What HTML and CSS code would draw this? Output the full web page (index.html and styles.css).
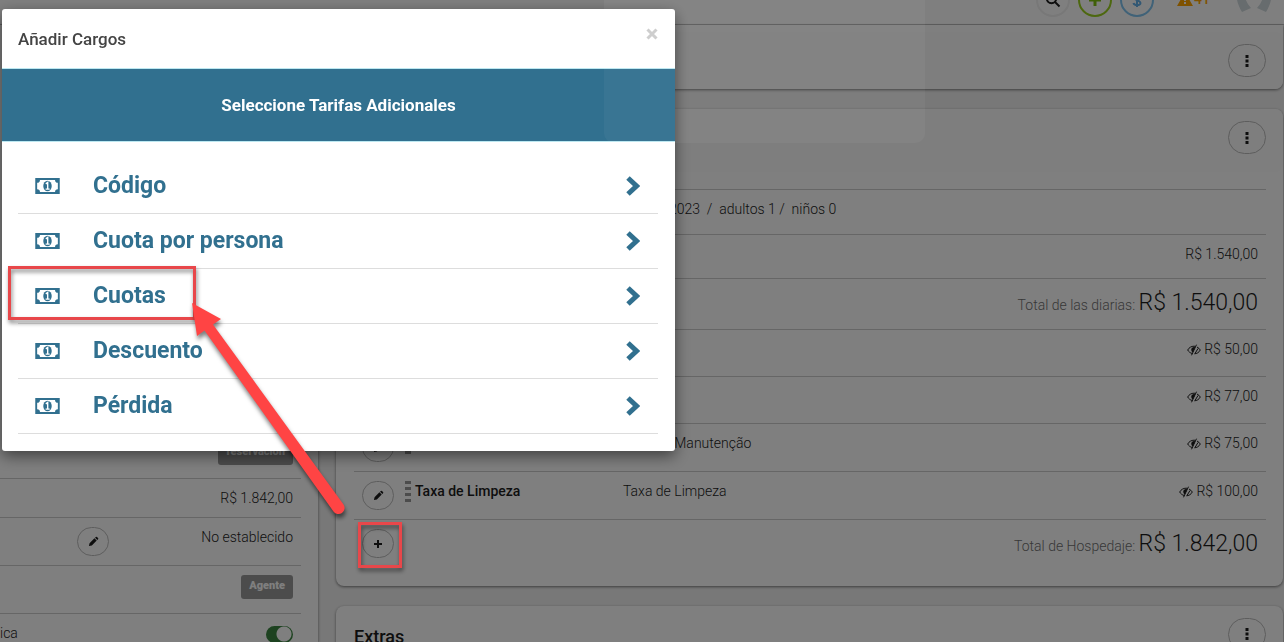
FILE: index.html
```html
<!DOCTYPE html>
<html lang="es">
  <head>
    <meta charset="utf-8">
    <meta name="viewport" content="width=device-width, initial-scale=1.0">
    <title>Añadir Cargos</title>
    <link rel="stylesheet" href="styles.css">
  </head>
  <body>
    <svg class="sprite" aria-hidden="true">
      <symbol id="pencil" viewBox="0 0 12 12"><path d="M1 11l.7-3.2L7 2.5 9.500 5 4.200 10.300zM7.700 1.800l.8-.8q.6-.5 1.200 0L11 2.300q.5.600 0 1.200l-.8.8z"/></symbol>
      <symbol id="dots" viewBox="0 0 4 12"><path d="M.5 0h3v3h-3zM.5 4.500h3v3h-3zM.5 9h3v3h-3z"/></symbol>
      <symbol id="eye" viewBox="0 0 14 12"><path d="M5.500 9.600C3 9 1.500 7.500.7 6 2 3.500 4.500 2.200 7 2.200l1.200.1M10 3c1.500.8 2.600 1.800 3.300 3-1.200 2.400-3.500 3.800-6 3.800" fill="none" stroke="currentColor"/><path d="M9.500.7L4.500 11.300M11 4.500L8.300 9" fill="none" stroke="currentColor"/><path d="M8.300 3.200L5.800 8.500C3.300 6.700 4 3.200 7 3z"/></symbol>
      <symbol id="money" viewBox="0 0 26 17"><path fill-rule="evenodd" d="M0 0h26v17H0zM5 2Q5 5 2 5v7q3 0 3 3h16q0-3 3-3V5q-3 0-3-3z"/><ellipse cx="13" cy="8.500" rx="4.500" ry="5.500"/><path d="M11.200 6.200l2-1.500v6.600M11 11.800h4.300" fill="none" stroke="#fff" stroke-width="1.500"/></symbol>
      <symbol id="chevron" viewBox="0 0 14 20"><path d="M2 2l8.500 8L2 18" fill="none" stroke="currentColor" stroke-width="5"/></symbol>
    </svg>

    <header class="topbar">
      <button class="round search" aria-label="Buscar"><svg viewBox="0 0 16 16"><circle cx="6.500" cy="6.500" r="4.700"/><path d="M10 10l4.500 4.500"/></svg></button>
      <button class="round add" aria-label="Agregar"><svg viewBox="0 0 16 16"><path d="M8 2v12M2 8h12"/></svg></button>
      <button class="round money" aria-label="Pagos"><svg viewBox="0 0 16 16"><path d="M11.500 5C11 2.500 5 2.500 5 5.500S11.500 8 11.500 11 5 13.500 4.500 11M8 1v14"/></svg></button>
      <a class="alerts" href="#"><svg viewBox="0 0 16 14"><path fill-rule="evenodd" d="M8 0l8 14H0zM7 5v4h2V5zm0 5v2h2v-2z"/></svg>41</a>
      <a class="avatar" href="#" aria-label="Perfil"><svg viewBox="0 0 34 34"><path d="M8 3C-2 8-3 20 5 33l9-4Q5 20 8 3zM26 3c10 5 11 17 3 30l-9-4Q29 20 26 3z"/></svg></a>
    </header>

    <div class="page">
      <aside class="summary">
        <div class="summaryRow badgeRow"><span class="badge">reservación</span></div>
        <div class="summaryRow total">R$ 1.842,00</div>
        <div class="summaryRow edit">
          <button class="pill" aria-label="Editar"><svg class="pencil"><use href="#pencil"/></svg></button>
          <span>No establecido</span>
        </div>
        <div class="summaryRow edit"><span class="badge">Agente</span></div>
        <div class="summaryRow toggleRow">
          <label for="electronica">ica</label>
          <input id="electronica" class="toggle" type="checkbox" checked>
        </div>
      </aside>

      <main>
        <section class="card first">
          <div class="cardHead"><button class="pill menu" aria-label="Opciones"><svg class="dots"><use href="#dots"/></svg></button></div>
        </section>

        <section class="card">
          <div class="cardHead"><button class="pill menu" aria-label="Opciones"><svg class="dots"><use href="#dots"/></svg></button></div>
          <table class="charges">
            <colgroup><col class="colEdit"><col class="colName"><col class="colText"><col></colgroup>
            <tr><td></td><td></td><td colspan="2"><span class="date">03/2023</span> &nbsp;/&nbsp; adultos 1 /&nbsp; niños 0</td></tr>
            <tr class="daily"><td></td><td></td><td></td><td class="amount">R$ 1.540,00</td></tr>
            <tr class="sum"><td colspan="4" class="amount"><span>Total de las diarias:</span> <strong>R$ 1.540,00</strong></td></tr>
            <tr class="fee"><td></td><td></td><td></td><td class="amount"><svg class="eye"><use href="#eye"/></svg>R$ 50,00</td></tr>
            <tr class="fee"><td></td><td></td><td></td><td class="amount"><svg class="eye"><use href="#eye"/></svg>R$ 77,00</td></tr>
            <tr class="fee">
              <td class="tools"><button class="pill" aria-label="Editar"><svg class="pencil"><use href="#pencil"/></svg></button><i class="grip"></i></td>
              <th>Manutenção</th><td>Taxa de Manutenção</td>
              <td class="amount"><svg class="eye"><use href="#eye"/></svg>R$ 75,00</td>
            </tr>
            <tr class="fee">
              <td class="tools"><button class="pill" aria-label="Editar"><svg class="pencil"><use href="#pencil"/></svg></button><i class="grip"></i></td>
              <th>Taxa de Limpeza</th><td>Taxa de Limpeza</td>
              <td class="amount"><svg class="eye"><use href="#eye"/></svg>R$ 100,00</td>
            </tr>
            <tr class="sum last">
              <td class="tools"><button class="pill" aria-label="Agregar cargo"><svg class="plus" viewBox="0 0 10 10"><path d="M5 1v8M1 5h8"/></svg></button></td>
              <td colspan="3" class="amount"><span>Total de Hospedaje:</span> <strong>R$ 1.842,00</strong></td>
            </tr>
          </table>
        </section>

        <section class="card extras">
          <h2>Extras</h2>
          <button class="pill menu" aria-label="Opciones"><svg class="dots"><use href="#dots"/></svg></button>
        </section>
      </main>
    </div>

    <div class="backdrop"></div>

    <div class="modal" role="dialog" aria-labelledby="modalTitle">
      <div class="modalHead">
        <h1 id="modalTitle">Añadir Cargos</h1>
        <button class="close" aria-label="Cerrar"><svg viewBox="0 0 12 12"><path d="M1.500 1.500l9 9M10.500 1.500l-9 9"/></svg></button>
      </div>
      <div class="band">Seleccione Tarifas Adicionales</div>
      <div class="options">
        <button class="option"><svg class="note"><use href="#money"/></svg><span>Código</span><svg class="chevron"><use href="#chevron"/></svg></button>
        <button class="option"><svg class="note"><use href="#money"/></svg><span>Cuota por persona</span><svg class="chevron"><use href="#chevron"/></svg></button>
        <button class="option"><svg class="note"><use href="#money"/></svg><span>Cuotas</span><svg class="chevron"><use href="#chevron"/></svg></button>
        <button class="option"><svg class="note"><use href="#money"/></svg><span>Descuento</span><svg class="chevron"><use href="#chevron"/></svg></button>
        <button class="option"><svg class="note"><use href="#money"/></svg><span>Pérdida</span><svg class="chevron"><use href="#chevron"/></svg></button>
      </div>
    </div>

    <div class="veil"></div>
    <div class="mark markOption"></div>
    <div class="mark markAdd"></div>
    <svg class="arrow" viewBox="0 0 160 220"><path d="M2 2l29 16-8 5.500L153.500 203.500a6 6 0 0 1-10 7L14.500 29.500 7 35z"/></svg>
  </body>
</html>
```
FILE: styles.css
```css
*{
  box-sizing: border-box;
}
body{
  margin: 0;
  height: 100vh;
  overflow: hidden;
  background-color: #f1f1f1;
  color: #1c1c1c;
  font: 300 14px/20px Roboto, "Liberation Sans", sans-serif;
}
button{
  padding: 0;
  border: 0;
  background: none;
  color: inherit;
  font: inherit;
}
svg{
  fill: currentColor;
}
.sprite{
  position: absolute;
  width: 0;
  height: 0;
}

/* top bar */
.topbar{
  display: flex;
  justify-content: flex-end;
  align-items: flex-end;
  height: 25px;
  padding: 0 13px 7px 0;
  background-color: #fff;
  border-bottom: 1px solid #c4c4c4;
}
.round{
  display: flex;
  align-items: center;
  justify-content: center;
  flex: none;
  width: 34px;
  height: 34px;
  margin-right: 8px;
  border: 2px solid #f0f0f0;
  border-radius: 50%;
}
.round svg{
  width: 16px;
  height: 16px;
  fill: none;
  stroke: currentColor;
  stroke-width: 3;
}
.search svg{
  stroke-width: 2;
}
.add{
  border-color: #9bd020;
  color: #7fc010;
}
.money{
  border-color: #80c4f0;
  color: #65b0e8;
}
.money svg{
  stroke-width: 2;
}
.alerts{
  display: flex;
  align-items: center;
  margin: 0 27px 8px 15px;
  color: #ffa500;
  font-weight: 500;
  text-decoration: none;
}
.alerts svg{
  width: 16px;
  height: 14px;
  margin-right: 1px;
}
.avatar{
  height: 34px;
  margin-bottom: 4px;
  color: #cfd8dc;
}
.avatar svg{
  display: block;
  width: 34px;
  height: 34px;
}

/* layout */
.page{
  display: flex;
  gap: 18px;
  height: calc(100vh - 25px);
  padding-right: 1px;
}
main{
  flex: 1;
}
.card, .summary{
  background-color: #fff;
  box-shadow: 0 1px 3px rgba(0, 0, 0, .5);
}
.card{
  margin-bottom: 20px;
  border-radius: 8px;
}
.first{
  padding-top: 7px;
  border-radius: 0 0 8px 8px;
}
.cardHead{
  display: flex;
  justify-content: flex-end;
  height: 63px;
  padding: 12px 17px 0;
  background-color: #fcfcfc;
  border-radius: 8px;
}
.first .cardHead{
  height: 57px;
}
.pill{
  display: inline-flex;
  align-items: center;
  justify-content: center;
  flex: none;
  width: 32px;
  height: 29px;
  border: 1px solid #bbb;
  border-radius: 15px;
}
.menu{
  width: 38px;
  height: 33px;
  border-radius: 17px;
}
.dots{
  width: 4px;
  height: 12px;
}
.pencil{
  width: 11px;
  height: 11px;
}
.plus{
  width: 10px;
  height: 10px;
  stroke: currentColor;
  stroke-width: 2;
}

/* summary */
.summary{
  flex: none;
  width: 318px;
  padding: 379px 17px 0 0;
}
.summaryRow{
  display: flex;
  justify-content: flex-end;
  padding: 9px 8px 0 0;
  border-bottom: 1px solid #ccc;
}
.badgeRow{
  height: 75px;
  padding-top: 37px;
}
.badge{
  height: 24px;
  padding: 0 8px;
  border-radius: 3px;
  background-color: #999;
  color: #fff;
  font-size: 11px;
  font-weight: 900;
  line-height: 22px;
}
.total{
  height: 39px;
}
.edit{
  height: 48px;
}
.edit .pill{
  margin-right: auto;
  margin-left: 77px;
}
.toggleRow{
  justify-content: space-between;
  border: 0;
}
.toggle{
  width: 27px;
  height: 17px;
  margin: 3px 0 0;
  border-radius: 9px;
  background: radial-gradient(circle at 18px 8px, #fff 7px, #3a8540 8px);
  appearance: none;
}

/* charges */
.charges{
  width: calc(100% - 35px);
  margin: 17px 17px 0 18px;
  border-collapse: collapse;
  table-layout: fixed;
}
.colEdit{
  width: 61px;
}
.colName{
  width: 208px;
}
.colText{
  width: 240px;
}
.charges td, .charges th{
  height: 45px;
  padding: 9px 0 0;
  border-top: 1px solid #ccc;
  text-align: left;
  vertical-align: top;
}
.charges th{
  font-weight: 500;
}
.charges .daily td{
  height: 44px;
}
.charges .fee td{
  height: 47px;
}
.charges .fee .tools{
  height: 48px;
}
.charges .sum td{
  height: 51px;
}
.charges .last td{
  height: 66px;
}
.charges .amount{
  padding-right: 8px;
  text-align: right;
}
.date{
  display: inline-block;
  width: 77px;
  text-align: right;
}
.sum .amount{
  color: #707070;
  line-height: 30px;
}
.sum strong{
  color: #1c1c1c;
  font-size: 23px;
  font-weight: 300;
}
.charges .tools{
  padding-left: 8px;
  white-space: nowrap;
}
.grip{
  display: inline-block;
  width: 6px;
  height: 22px;
  margin-left: 11px;
  vertical-align: top;
  background: repeating-linear-gradient(#999 0 3px, transparent 3px 6px);
}
.eye{
  width: 14px;
  height: 12px;
  margin-right: 3px;
  vertical-align: -2px;
}
.extras{
  display: flex;
  justify-content: space-between;
  height: 80px;
  padding: 12px 17px 0 18px;
}
.extras h2{
  margin: 9px 0 0;
  font-size: 18px;
  font-weight: 500;
}

/* modal */
.backdrop{
  position: fixed;
  inset: 0;
  background-color: rgba(0, 0, 0, .5);
}
.modal{
  position: fixed;
  top: 9px;
  left: 2px;
  width: 673px;
  max-width: calc(100% - 4px);
  padding-bottom: 17px;
  border-radius: 3px;
  background-color: #fff;
  box-shadow: 0 5px 15px rgba(0, 0, 0, .5);
}
.modalHead{
  display: flex;
  justify-content: space-between;
  align-items: center;
  height: 59px;
  padding: 0 17px 0 16px;
}
.modalHead h1{
  margin: 0;
  color: #444;
  font-size: 17px;
  font-weight: 500;
}
.close{
  width: 12px;
  height: 20px;
  margin-bottom: 8px;
}
.close svg{
  width: 12px;
  height: 12px;
  stroke: #ccc;
  stroke-width: 3;
}
.band{
  padding: 26px 0;
  background-color: #31708f;
  border: solid #bce8f1;
  border-width: 1px 0;
  color: #fff;
  font-size: 17px;
  font-weight: 700;
  text-align: center;
}
.options{
  padding: 17px 17px 0 16px;
}
.option{
  display: flex;
  align-items: center;
  width: 100%;
  height: 55px;
  padding: 0 18px 0 17px;
  border-bottom: 1px solid #ddd;
  color: #31708f;
  font-size: 23px;
  font-weight: 700;
}
.option span{
  flex: 1;
  margin-left: 33px;
  text-align: left;
}
.note{
  width: 25px;
  height: 16px;
}
.chevron{
  width: 14px;
  height: 20px;
}

/* highlights over the page */
.veil{
  position: fixed;
  top: 0;
  left: 604px;
  width: 321px;
  height: 143px;
  border-radius: 0 0 10px 10px;
  background-color: rgba(255, 255, 255, .04);
}
.mark{
  position: fixed;
  border: 3px solid #e8474a;
  filter: drop-shadow(1px 3px 2px rgba(0, 0, 0, .5));
}
.markOption{
  top: 266px;
  left: 8px;
  width: 188px;
  height: 54px;
}
.markAdd{
  top: 522px;
  left: 358px;
  width: 44px;
  height: 46px;
}
.arrow{
  position: fixed;
  top: 301px;
  left: 190px;
  width: 160px;
  height: 220px;
  color: #ff4444;
  filter: drop-shadow(1px 4px 2px rgba(0, 0, 0, .5));
}
```
